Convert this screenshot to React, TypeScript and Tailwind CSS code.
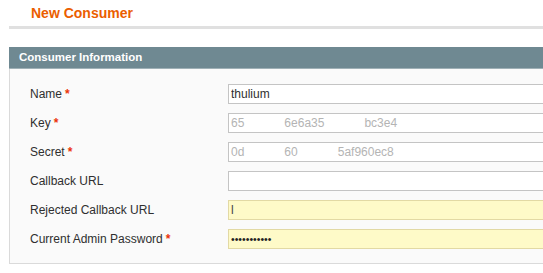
import React from "react";

const Req = () => <span className="text-[#eb340a] ml-[3px] font-bold">*</span>;

const fieldCls =
  "w-[420px] h-[20px] border border-[#c4c4c4] px-[2px] text-[12px] leading-[18px] outline-none";

const App = () => {
  return (
    <div className="w-[543px] h-[273px] overflow-hidden bg-white font-['Liberation_Sans',Arial,sans-serif] text-[#2f2f2f]">
      <div className="pl-[9px]">
        {/* page title */}
        <div className="pt-[4px] pl-[22px] h-[22px]">
          <h3 className="text-[14px] leading-[18px] font-bold text-[#eb5e00]">
            New Consumer
          </h3>
        </div>
        <div className="mt-[4px] h-[3px] bg-[#e0e0e0]" />

        {/* fieldset */}
        <div className="mt-[18px] w-[720px]">
          <div className="h-[22px] bg-[#6f8992] border-b border-[#9fb0b6] pl-[10px]">
            <h4 className="text-[11.5px] leading-[21px] font-bold text-white">
              Consumer Information
            </h4>
          </div>
          <div className="bg-[#fafafa] border-l border-b border-[#dadada] pt-[15px] pb-[14px] pl-[20px]">
            <div className="flex flex-col gap-[9px]">
              <div className="flex items-center h-[20px]">
                <label className="w-[198px] text-[12px]">
                  Name
                  <Req />
                </label>
                <input className={fieldCls + " bg-white text-[#2f2f2f]"} value="thulium" readOnly />
              </div>
              <div className="flex items-center h-[20px]">
                <label className="w-[198px] text-[12px]">
                  Key
                  <Req />
                </label>
                <div className={fieldCls + " bg-white text-[#b4b4b4] flex items-center"}>
                  <span>65</span>
                  <span className="ml-10">6e6a35</span>
                  <span className="ml-10">bc3e4</span>
                </div>
              </div>
              <div className="flex items-center h-[20px]">
                <label className="w-[198px] text-[12px]">
                  Secret
                  <Req />
                </label>
                <div className={fieldCls + " bg-white text-[#b4b4b4] flex items-center"}>
                  <span>0d</span>
                  <span className="ml-10">60</span>
                  <span className="ml-10">5af960ec8</span>
                </div>
              </div>
              <div className="flex items-center h-[20px]">
                <label className="w-[198px] text-[12px]">Callback URL</label>
                <input className={fieldCls + " bg-white"} value="" readOnly />
              </div>
              <div className="flex items-center h-[20px]">
                <label className="w-[198px] text-[12px]">Rejected Callback URL</label>
                <input
                  className={fieldCls + " bg-[#fefac8] border-[#e2d9a4] text-[#444]"}
                  value="l"
                  readOnly
                />
              </div>
              <div className="flex items-center h-[20px]">
                <label className="w-[198px] text-[12px]">
                  Current Admin Password
                  <Req />
                </label>
                <input
                  type="password"
                  className={fieldCls + " bg-[#fefac8] border-[#e2d9a4] text-[#222] !text-[10.5px]"}
                  value="12345678901"
                  readOnly
                />
              </div>
            </div>
          </div>
        </div>
      </div>
    </div>
  );
};

export default App;
